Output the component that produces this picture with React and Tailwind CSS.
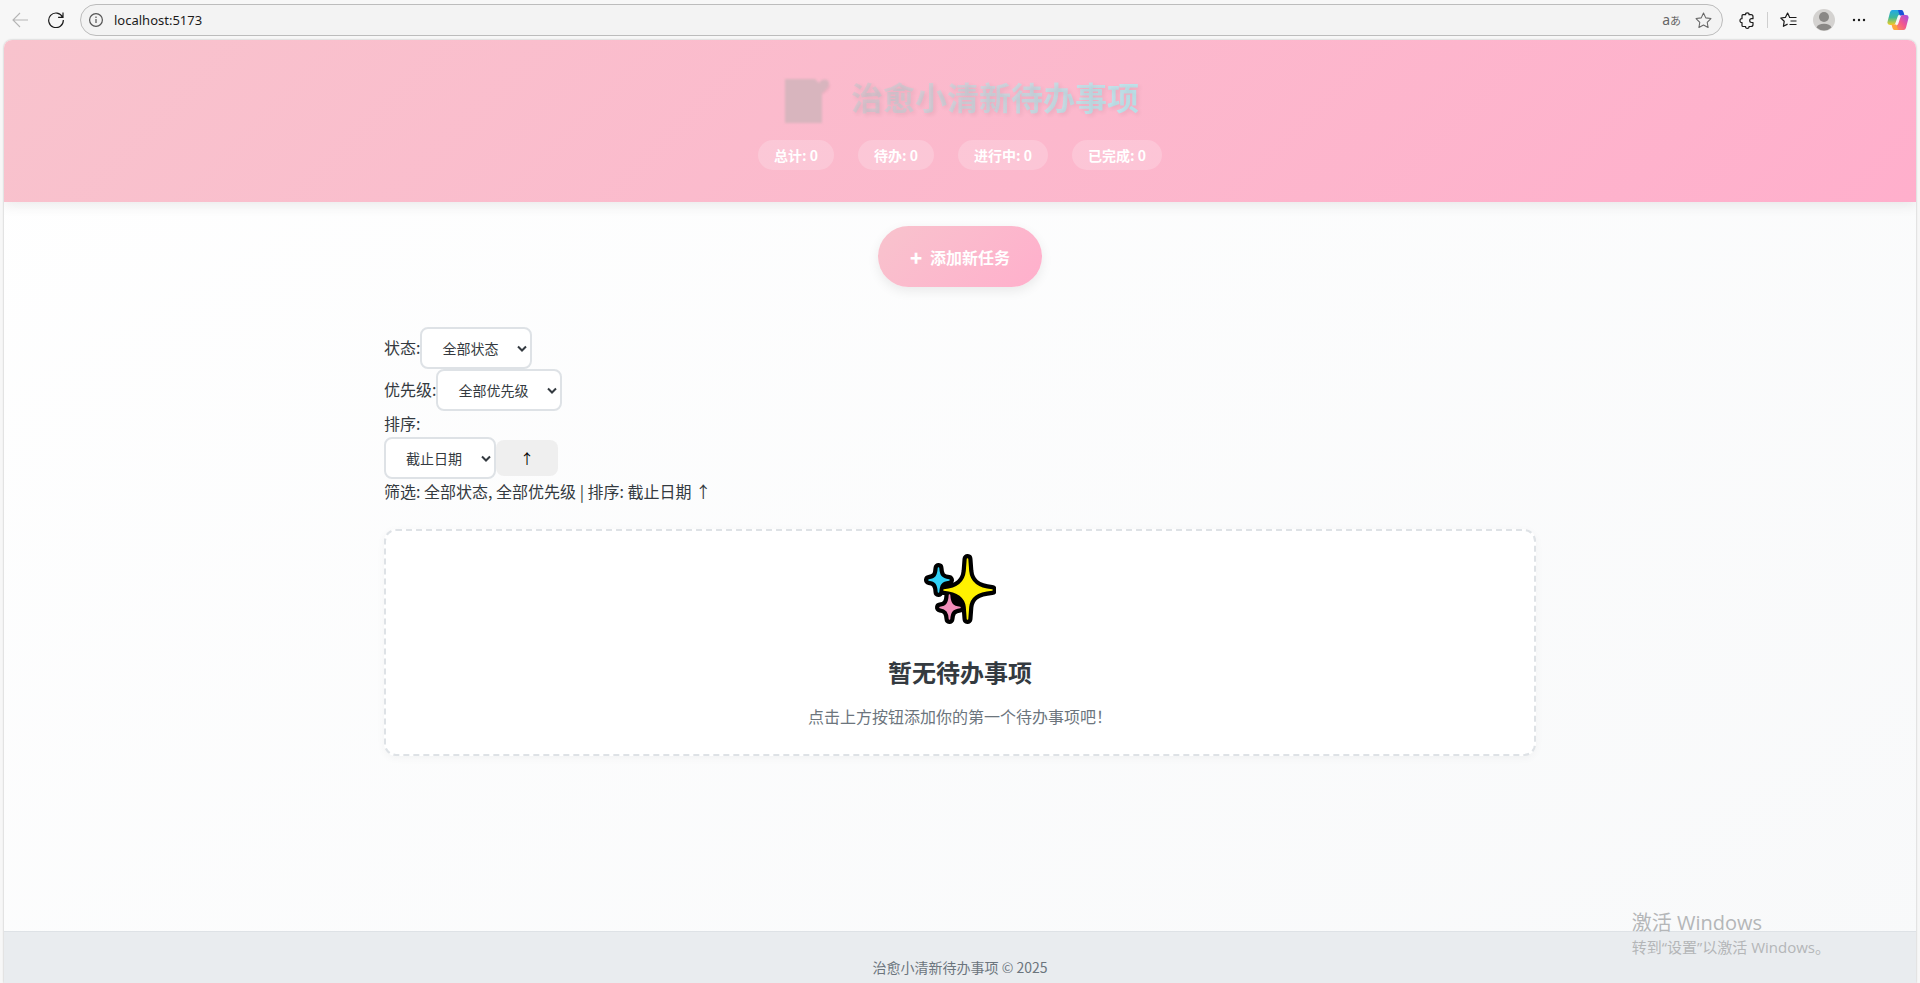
const chevron = 'M1 1.5 5 5.5 9 1.5';

function Badge({ children }) {
  return (
    <span className="rounded-full bg-white/20 px-4 py-1 text-sm leading-[22px] font-bold text-white">{children}</span>
  );
}

function Picker({ id, options, width }) {
  return (
    <span className={`relative inline-flex items-center ${width}`}>
      <select
        id={id}
        className="h-[42px] w-full appearance-none rounded-lg border-2 border-[#dee2e6] bg-white pl-5 text-sm text-[#343a40]"
      >
        {options.map((o) => (
          <option key={o}>{o}</option>
        ))}
      </select>
      <svg className="pointer-events-none absolute right-[5px] h-[7px] w-[10px]" viewBox="0 0 10 7" fill="none" stroke="#343a40" strokeWidth="2">
        <path d={chevron} />
      </svg>
    </span>
  );
}

function Sparkles() {
  const big =
    'M43.500 6 44.400 18C45.500 29 52 35.500 68 37C52 38.500 45.500 44 44.400 54L43.500 66 42.600 54C41.500 44 35 38.500 20 37C35 35.500 41.500 29 42.600 18Z';
  const blue = 'M14.500 15C15 23 17 26 25 27C17 28 15 31 14.500 39C14 31 12 28 5 27C12 26 14 23 14.500 15Z';
  const pink = 'M25.500 42C26 50 28 53.500 36 54.500C28 55.500 26 59 25.500 66C25 59 23 55.500 16 54.500C23 53.500 25 50 25.500 42Z';
  return (
    <svg className="h-[72px] w-[72px]" viewBox="0 0 72 72" aria-hidden="true" strokeLinejoin="round" strokeLinecap="round">
      <g fill="#000" stroke="#000" strokeWidth="10">
        <path d={big} />
        <path d={blue} />
        <path d={pink} />
        <path d="M28 43 38 53" />
      </g>
      <g strokeWidth="1.600">
        <path d={blue} fill="#31d2f7" stroke="#31d2f7" />
        <path d={pink} fill="#f38fbb" stroke="#f38fbb" />
        <path d={big} fill="#fff100" stroke="#fff100" />
      </g>
    </svg>
  );
}

function BrowserBar() {
  return (
    <div className="flex h-10 shrink-0 items-center bg-[#f7f7f7] pr-[11px] pl-3 text-[#1b1b1b]">
      <button aria-label="后退" className="flex w-4 justify-center">
        <svg width="16" height="16" viewBox="0 0 16 16" fill="none" stroke="#b5b5b5" strokeWidth="1.1">
          <path d="M16 8H1M8 1 1 8l7 7" />
        </svg>
      </button>
      <button aria-label="刷新" className="ml-5 flex">
        <svg width="16" height="16" viewBox="0 0 16 16" fill="none" stroke="#1b1b1b" strokeWidth="1.2">
          <path d="M14.6 5.2A7.3 7.3 0 1 0 15.3 8M15 .5v4.9h-4.9" />
        </svg>
      </button>
      <div className="ml-4 flex h-8 flex-1 items-center rounded-full border border-[#bcbcbc] bg-[#f3f3f3] pr-2.5 pl-2">
        <svg width="14" height="14" viewBox="0 0 14 14" fill="none" stroke="#555" strokeWidth="1.2">
          <circle cx="7" cy="7" r="6.4" />
          <path d="M7 6v4M7 3.6v1.3" />
        </svg>
        <input
          aria-label="地址"
          defaultValue="localhost:5173"
          className="ml-[11px] min-w-0 flex-1 bg-transparent font-['Noto_Sans','Noto_Sans_CJK_SC',sans-serif] text-[13px] outline-none"
        />
        <button className="font-['Noto_Sans','Noto_Sans_CJK_JP',sans-serif] text-sm leading-4 text-[#666]" aria-label="翻译">
          a<span className="text-[11px]">あ</span>
        </button>
        <button aria-label="收藏" className="ml-3.5">
          <svg width="17" height="17" viewBox="0 0 24 24" fill="none" stroke="#666" strokeWidth="1.5" strokeLinejoin="round">
            <path d="m12 1.5 3.2 6.8 7.3 1-5.3 5.2 1.3 7.4L12 18.400l-6.500 3.500 1.300-7.400L1.500 9.300l7.300-1z" />
          </svg>
        </button>
      </div>
      <button aria-label="扩展" className="ml-4">
        <svg width="17" height="17" viewBox="0 0 17 17" fill="none" stroke="#1b1b1b" strokeWidth="1.2" strokeLinejoin="round">
          <path d="M4 2.700h2.600q-.2-1.900 1.700-1.900t1.700 1.900H12q2 0 2 2v2h-1.400a1.900 1.900 0 0 0 0 3.800H14v2q0 2-2 2h-2q.2 1.900-1.700 1.900t-1.700-1.900H4q-1 0-1-1v-3q-2 .2-2-1.900t2-1.900v-3q0-1 1-1Z" />
        </svg>
      </button>
      <span className="ml-[11px] h-4 w-px bg-[#cfcfcf]" />
      <button aria-label="收藏夹" className="ml-3">
        <svg width="17" height="16" viewBox="0 0 17 16" fill="none" stroke="#1b1b1b" strokeWidth="1.2" strokeLinejoin="round">
          <path d="M9.500 5 7.600 1 5.500 5.300.8 6l3.400 3.300-.8 5 4.200-2.200M9 5.500h7.500M10.500 9h6M9.500 12.500h7" />
        </svg>
      </button>
      <button aria-label="个人资料" className="ml-4">
        <svg width="22" height="22" viewBox="0 0 22 22">
          <circle cx="11" cy="11" r="11" fill="#d4d2d0" />
          <circle cx="11" cy="8" r="5" fill="#8a8886" />
          <path d="M3.500 18.500a7.800 5 0 0 1 15 0A11 11 0 0 1 3.500 18.500Z" fill="#8a8886" />
        </svg>
      </button>
      <button aria-label="更多" className="ml-4">
        <svg width="16" height="16" viewBox="0 0 16 16" fill="#1b1b1b">
          <circle cx="3" cy="8" r="1.200" />
          <circle cx="8" cy="8" r="1.200" />
          <circle cx="13" cy="8" r="1.200" />
        </svg>
      </button>
      <button aria-label="Copilot" className="ml-5">
        <svg width="22" height="22" viewBox="0 0 22 22">
          <defs>
            <linearGradient id="cl" x1="0" y1="0" x2="0" y2="1">
              <stop offset="0" stopColor="#20a8e8" />
              <stop offset=".5" stopColor="#3fb898" />
              <stop offset="1" stopColor="#f6d020" />
            </linearGradient>
            <linearGradient id="cr" x1="1" y1="0" x2="0" y2="1">
              <stop offset="0" stopColor="#a04de8" />
              <stop offset=".5" stopColor="#f2578f" />
              <stop offset="1" stopColor="#ff9a4a" />
            </linearGradient>
          </defs>
          <path d="M5.500 1h9L12 6q-1 .2-1.500 2L8.300 14.500Q7.800 16 6 16H3Q-.3 16 .6 12.500L3 3.300Q3.600 1 5.500 1Z" fill="url(#cl)" />
          <path d="M11 1h3.500q1.500 0 2 2l1 3.500h-4.500Q12 6 12 4.500Z" fill="#1b52d8" />
          <path d="M16.500 21h-9L10 16q1-.2 1.500-2l2.200-6.500Q14.200 6 16 6h3q3.300 0 2.400 3.500L19 18.700Q18.400 21 16.500 21Z" fill="url(#cr)" />
          <path d="M11 21H7.500q-1.500 0-2-2l-1-3.500H9q1 .5 1 2Z" fill="#ffa63c" />
        </svg>
      </button>
    </div>
  );
}

export default function App() {
  return (
    <div className="relative flex min-h-screen flex-col bg-[#f7f7f7] font-['Noto_Sans_CJK_SC',sans-serif] text-base leading-[26px] text-[#343a40]">
      <BrowserBar />
      <div className="mx-1 flex flex-1 flex-col overflow-hidden rounded-t-lg bg-linear-150 from-white to-[#f8f9fa] shadow-[0_0_2px_rgba(0,0,0,0.3)]">
        <header className="flex h-[162px] flex-col items-center bg-linear-135 from-[#f8c3cd] to-[#ffafcc] pt-7 shadow-[0_4px_12px_rgba(0,0,0,0.08)]">
          <h1 className="flex items-center gap-5 text-[32px] leading-[50px] font-bold">
            <svg width="50" height="56" viewBox="0 -3 50 56" className="blur-[1px]" aria-hidden="true">
              <path d="M4 9h30l5 5c3-5 10-4 10 1 0 4-4 6-8 9v28H4Z" fill="#000" opacity=".05" />
              <path d="M4 8h30l4 4c3-5 10-4 10 0 0 5-4 7-7 10v30H4Z" fill="#d8b5be" />
            </svg>
            <span className="bg-linear-135 from-[#dfbfca] to-[#bdeaf2] bg-clip-text text-transparent [text-shadow:2px_2px_4px_rgba(0,0,0,0.07)]">
              治愈小清新待办事项
            </span>
          </h1>
          <div className="mt-4 flex gap-6">
            <Badge>总计: 0</Badge>
            <Badge>待办: 0</Badge>
            <Badge>进行中: 0</Badge>
            <Badge>已完成: 0</Badge>
          </div>
        </header>

        <main className="mx-auto flex w-full max-w-[1200px] flex-1 flex-col px-6 pt-6">
          <button className="flex items-center gap-2 self-center rounded-full bg-linear-135 from-[#f8c3cd] to-[#ffafcc] px-8 pt-[19px] pb-[17px] leading-[25px] font-bold text-white shadow-[0_4px_12px_rgba(0,0,0,0.08)]">
            <span className="text-xl leading-[25px] font-black">+</span>添加新任务
          </button>

          <section className="mt-10">
            <div className="flex items-center">
              <label htmlFor="status" className="pb-0.5">状态:</label>
              <Picker id="status" width="w-28" options={['全部状态', '待办', '进行中', '已完成']} />
            </div>
            <div className="flex items-center">
              <label htmlFor="priority" className="pb-0.5">优先级:</label>
              <Picker id="priority" width="w-[126px]" options={['全部优先级', '高', '中', '低']} />
            </div>
            <label htmlFor="sort" className="block leading-6">排序:</label>
            <div className="mt-0.5 flex items-center">
              <Picker id="sort" width="w-28" options={['截止日期', '优先级', '创建时间']} />
              <button aria-label="升序" className="h-9 w-[62px] rounded-lg bg-[#efefef] text-sm text-black">↑</button>
            </div>
            <p className="leading-6">筛选: 全部状态, 全部优先级 | 排序: 截止日期 ↑</p>
          </section>

          <section className="mt-[26px] flex flex-col items-center rounded-xl border-2 border-dashed border-[#dee2e6] bg-white pt-[22px] pb-[25px] shadow-[0_2px_8px_rgba(0,0,0,0.04)]">
            <Sparkles />
            <h2 className="mt-7 text-2xl leading-[38px] font-bold">暂无待办事项</h2>
            <p className="mt-3 text-[#6c757d]">点击上方按钮添加你的第一个待办事项吧！</p>
          </section>
        </main>

        <footer className="border-t border-[#dee2e6] bg-[#e9ecef] pt-6 pb-[5px] text-center text-sm leading-[22px] text-[#6c757d]">
          治愈小清新待办事项 © 2025
        </footer>
      </div>

      <div className="pointer-events-none absolute right-[90px] bottom-[25px] font-['Open_Sans','Noto_Sans_CJK_SC',sans-serif] text-[#b4b6b8]">
        <p className="text-xl leading-[26px]">激活 Windows</p>
        <p className="text-[15px] leading-[22px]">转到“设置”以激活 Windows。</p>
      </div>
    </div>
  );
}
